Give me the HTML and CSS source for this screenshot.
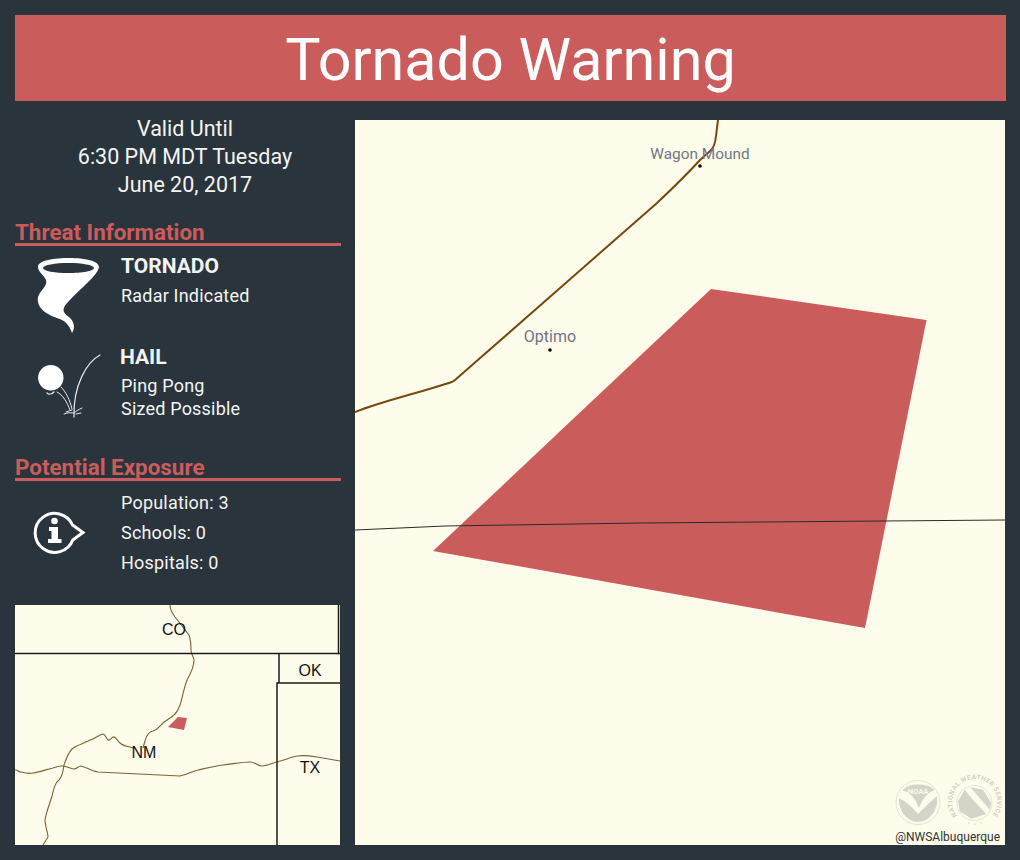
FILE: index.html
```html
<!DOCTYPE html>
<html lang="en">
<head>
<meta charset="utf-8">
<title>Tornado Warning</title>
<link rel="stylesheet" href="styles.css">
</head>
<body>
<div class="page">
  <header class="banner">Tornado Warning</header>
  <div class="content">
    <aside class="side">
      <div class="valid">
        <div>Valid Until</div>
        <div>6:30 PM MDT Tuesday</div>
        <div>June 20, 2017</div>
      </div>
      <h2 class="section section-threat">Threat Information</h2>
      <div class="threat threat-tornado">
        <svg class="icon" viewBox="0 0 90 90" width="90" height="90">
          <path fill="#fff" fill-rule="evenodd" d="M13 17C13 10 30 8 44 8C60 8 74 11 74 17C73 25 56 38 43 52C36 59 38 63 44 67C50 72 50 79 47 83C45 77 42 72 35 69C22 65 11 58 13 47C15 40 23 36 21 30C19 25 13 22 13 17ZM18 18C18 21 30 23 43.500 23C57 23 69 21 69 18C69 15 57 13 43.500 13C30 13 18 15 18 18Z"/>
        </svg>
        <div class="threat-text">
          <div class="threat-name">TORNADO</div>
          <div class="threat-line">Radar Indicated</div>
        </div>
      </div>
      <div class="threat threat-hail">
        <svg class="icon" viewBox="0 0 90 80" width="90" height="80">
          <circle cx="25.800" cy="32.700" r="12.700" fill="#fff"/>
          <g fill="none" stroke="#e8e8e8" stroke-linecap="round">
            <path stroke-width="1.200" d="M75 10C62 17 48 40 49 72"/>
            <path stroke-width="1" d="M36 42C41 47 45 55 47 64"/>
            <path stroke-width="1" d="M32 47C38 50 42 57 45 65"/>
            <path stroke-width="1" d="M39 69C43 67 47 68 49 68C51 66 53 65 57 63"/>
            <path stroke-width="1" d="M41 67L47 65M51 69L56 68"/>
            <path stroke-width="1.200" d="M22 48C24 50 27 49 29 47"/>
          </g>
        </svg>
        <div class="threat-text">
          <div class="threat-name threat-name-hail">HAIL</div>
          <div class="threat-line">Ping Pong</div>
          <div class="threat-line">Sized Possible</div>
        </div>
      </div>
      <h2 class="section section-exposure">Potential Exposure</h2>
      <div class="exposure">
        <svg class="icon-info" viewBox="0 0 70 65" width="70" height="65">
          <path fill="none" stroke="#fff" stroke-width="3" stroke-linejoin="miter" d="M47.500 25A19.500 19.500 0 1 0 47.800 40L58 32.500Z"/>
          <circle cx="29.500" cy="21" r="3.300" fill="#fff"/>
          <path fill="#fff" d="M24 27H33V39H36.500V43H23V39H26.500V31H24Z"/>
        </svg>
        <div class="exposure-list">
          <div>Population: 3</div>
          <div>Schools: 0</div>
          <div>Hospitals: 0</div>
        </div>
      </div>
      <svg class="inset" viewBox="0 0 325 240" width="325" height="240">
        <g fill="none" stroke="#7d6233" stroke-width="1.100" stroke-linejoin="round">
          <path d="M155 0C155 5 157 8 160 12C165 18 170 25 174 30C176 36 176 42 176 45C176 50 179 52 179 55C179 61 176 68 172 75C168 86 167 95 165 100C163 106 162 107 160 109C156 113 150 116 148 118C144 122 142 125 138 126C132 127 131 133 130 136L128 143"/>
          <path d="M118 143C112 141 108 141 105 138C102 135 100 131 98 132C96 133 95 136 93 135C91 133 90 129 88 129C83 130 80 134 75 135C70 138 60 141 57 144C53 148 51 154 49 160C48 168 47 172 44 175C40 178 39 183 37 191C35 198 31 208 30 215C30 221 33 228 33 232L28 240"/>
          <path d="M0 165C3 165 4 167 6 167C10 168 14 169 18 168C25 167 33 164 38 163C42 162 44 161 47 161C52 161 56 164 59 164C62 164 63 161 66 161C71 162 77 166 83 167L165 171C172 170 177 166 183 165C192 163 200 161 208 160C218 159 225 157 235 157C240 157 243 161 247 161C252 161 257 158 262 157C270 155 276 152 282 151C288 150 296 151 302 152L325 156"/>
        </g>
        <g fill="none" stroke="#1c1c1c" stroke-width="1.500">
          <path d="M0 48.500H323.500V0"/>
          <path d="M323 48.500H325"/>
          <path d="M264 48.500V78"/>
          <path d="M262 240V78H325"/>
        </g>
        <path fill="#cb5c5c" d="M153 122L163 112L172 113L169 125Z"/>
        <g class="inset-label">
          <text x="159" y="30">CO</text>
          <text x="129" y="153">NM</text>
          <text x="295" y="71">OK</text>
          <text x="295" y="168">TX</text>
        </g>
      </svg>
    </aside>
    <main class="map">
      <svg class="map-svg" viewBox="0 0 650 725" width="650" height="725">
        <path fill="none" stroke="#77490f" stroke-width="2" stroke-linejoin="round" d="M363 0L361 16C360 24 359 27 355 31L345 40C335 51 320 66 302 83L100 260C98 262 96 262.500 92 263.500C60 274 28 281 0 292"/>
        <path fill="#cb5c5c" d="M356 169L571.500 200L510 508L78 431Z"/>
        <path fill="none" stroke="#2b2b2b" stroke-width="1" d="M0 410L90 406L285 403L650 400"/>
        <circle cx="345" cy="46" r="1.800" fill="#000"/>
        <circle cx="195" cy="230" r="1.800" fill="#000"/>
        <g class="place-label">
          <text class="place-wagon" x="345" y="39">Wagon Mound</text>
          <text class="place-optimo" x="195" y="222">Optimo</text>
        </g>
        <g class="logo">
          <circle cx="563" cy="682.500" r="22" fill="none" stroke="#e4e3d6" stroke-width="1"/>
          <path fill="#d4d4c8" d="M547.500 670.500C552 665 558 664.500 563 664.500C570 664.500 576 666 579.500 670C574 672 568 677 564 688C560 677 554 672 547.500 670.500Z"/>
          <path fill="#d4d4c8" d="M544 678C552 682 558 688 563 694C568 689 574 683 582 676C584 690 574 702 563 702C552 702 543 690 544 678Z"/>
          <text class="logo-noaa" x="563" y="674">NOAA</text>
          <circle cx="619.500" cy="683" r="17.500" fill="none" stroke="#d8d8cc" stroke-width="0.700"/>
          <path fill="#d4d4c8" d="M603 681.300L609.700 669.700L616.300 678L631.300 694L616.300 698.700L604.700 691.300Z"/>
          <path fill="#d4d4c8" d="M615.300 667.300L628 669.700L636.300 683L634.700 689.700L624.700 678Z"/>
          <path id="nws-arc" fill="none" d="M605.500 699A22.500 22.500 0 1 1 634 699"/>
          <text class="logo-nws"><textPath href="#nws-arc" startOffset="50%">NATIONAL WEATHER SERVICE</textPath></text>
          <circle cx="614" cy="703" r="0.700" fill="#d0d0c5"/>
          <circle cx="620" cy="704" r="0.700" fill="#d0d0c5"/>
          <circle cx="626" cy="703" r="0.700" fill="#d0d0c5"/>
        </g>
        <text class="handle" x="645" y="721">@NWSAlbuquerque</text>
      </svg>
    </main>
  </div>
</div>
</body>
</html>
```
FILE: styles.css
```css
* { box-sizing: border-box; }
html, body { margin: 0; padding: 0; }
body {
  width: 1020px;
  height: 860px;
  background: #2a343c;
  color: #f4f4f4;
  font-family: Roboto, "Liberation Sans", sans-serif;
  overflow: hidden;
}
.page { padding: 15px 14px 15px 15px; }
.banner {
  height: 86px;
  background: #cb5c5c;
  color: #fff;
  font-size: 59.300px;
  line-height: 90px;
  text-align: center;
}
.content {
  display: grid;
  grid-template-columns: 326px 650px;
  column-gap: 14px;
  margin-top: 19px;
  height: 725px;
}
.side { display: flex; flex-direction: column; height: 725px; }
.valid {
  margin-top: -5px;
  padding-left: 14px;
  font-size: 21.500px;
  line-height: 28px;
  text-align: center;
  height: 83px;
}
.section {
  margin: 0;
  color: #cb5c5c;
  font-size: 22.400px;
  font-weight: 700;
  line-height: 30px;
  height: 29px;
  border-bottom: 3px solid #cb5c5c;
}
.section-threat { margin-top: 19px; }
.section-exposure { margin-top: 27px; }
.threat { display: flex; }
.threat-tornado { margin-top: 4px; height: 90px; }
.threat-hail { margin-top: 5px; height: 80px; }
.icon { flex: none; margin-left: 10px; }
.threat-text { margin-left: 6px; }
.threat-name { font-size: 21px; font-weight: 700; line-height: 24px; margin-top: 4px; margin-bottom: 6px; }
.threat-name-hail { margin-top: 0; margin-bottom: 5px; margin-left: -1px; }
.threat-line { font-size: 18px; line-height: 23px; letter-spacing: 0.200px; }
.exposure { display: flex; margin-top: 7px; height: 95px; }
.icon-info { flex: none; margin-left: 10px; margin-top: 12px; }
.exposure-list { margin-left: 26px; font-size: 18px; line-height: 30px; letter-spacing: 0.200px; }
.inset { display: block; margin-top: auto; background: #fefcea; }
.inset-label text { font-family: "Liberation Sans", sans-serif; font-size: 16px; fill: #111; text-anchor: middle; }
.map { background: #fefcea; height: 725px; }
.map-svg { display: block; }
.place-label text { fill: #72748a; text-anchor: middle; }
.place-wagon { font-size: 15.400px; }
.place-optimo { font-size: 16px; }
.logo-noaa { font-size: 7.500px; font-weight: 700; fill: #fbfaec; text-anchor: middle; }
.logo-nws { font-size: 6.500px; font-weight: 700; fill: #d0d0c5; text-anchor: middle; letter-spacing: 0.400px; }
.handle { font-size: 12px; fill: #333; text-anchor: end; }
```
